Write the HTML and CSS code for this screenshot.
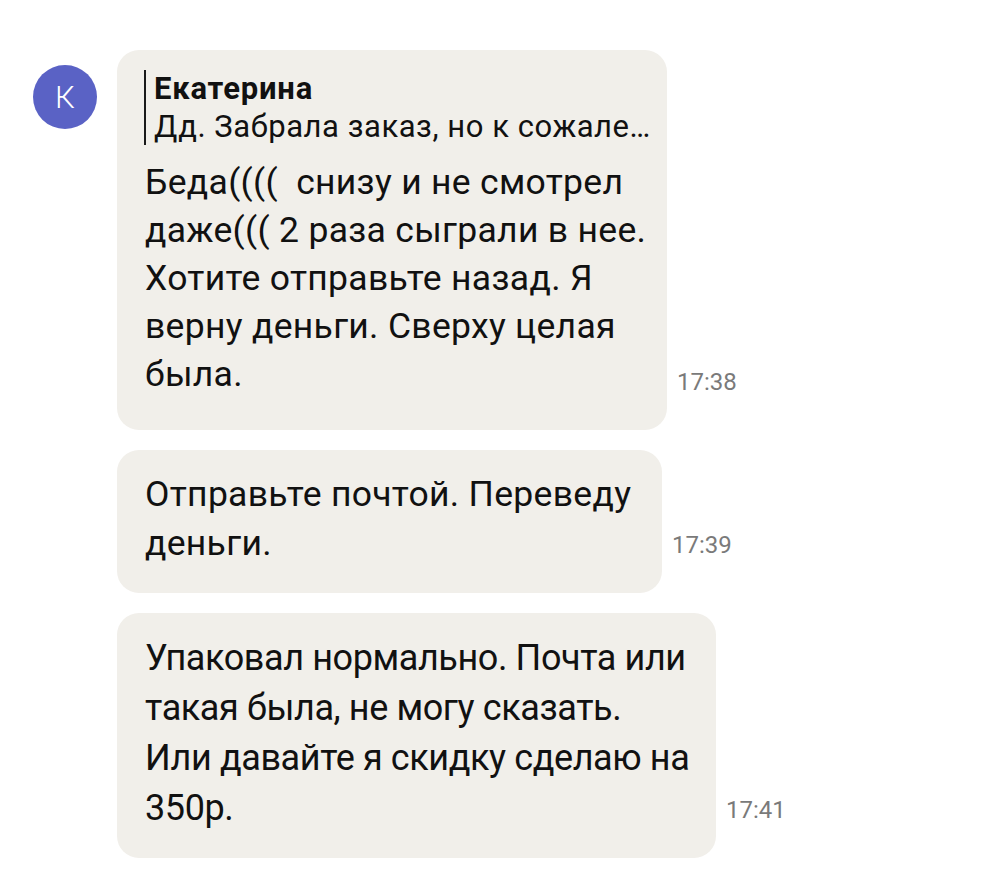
FILE: index.html
```html
<!DOCTYPE html>
<html lang="ru">
<head>
    <meta charset="UTF-8">
    <meta name="viewport" content="width=device-width, initial-scale=1.0">
    <title>Чат</title>
    <link rel="stylesheet" href="styles.css">
</head>
<body>
    <main class="chat">
        <!-- first message has avatar + quoted reply -->
        <div class="msg-row">
            <div class="avatar">К</div>
            <div class="bubble bubble-first">
                <div class="reply">
                    <div class="reply-name">Екатерина</div>
                    <div class="reply-text">Дд. Забрала заказ, но к сожале…</div>
                </div>
                <p class="msg-text">Беда(((( &nbsp;снизу и не смотрел<br>даже((( 2 раза сыграли в нее.<br>Хотите отправьте назад. Я<br>верну деньги. Сверху целая<br>была.</p>
            </div>
            <span class="msg-time">17:38</span>
        </div>

        <div class="msg-row">
            <div class="avatar-space"></div>
            <div class="bubble bubble-second">
                <p class="msg-text">Отправьте почтой. Переведу<br>деньги.</p>
            </div>
            <span class="msg-time">17:39</span>
        </div>

        <div class="msg-row">
            <div class="avatar-space"></div>
            <div class="bubble bubble-third">
                <p class="msg-text">Упаковал нормально. Почта или<br>такая была, не могу сказать.<br>Или давайте я скидку сделаю на<br>350р.</p>
            </div>
            <span class="msg-time">17:41</span>
        </div>
    </main>
</body>
</html>
```

FILE: styles.css
```css
/* Chat layout */
body {
    margin: 0;
    background-color: #ffffff;
    font-family: Roboto, "Noto Sans", sans-serif;
    color: #111111;
}

.chat {
    padding: 50px 0 0 33px;
    display: flex;
    flex-direction: column;
    gap: 20px;
}

.msg-row {
    display: flex;
    align-items: flex-end;
}

.avatar,
.avatar-space {
    width: 64px;
    flex-shrink: 0;
    margin-right: 20px;
}

.avatar {
    height: 64px;
    align-self: flex-start;
    margin-top: 15px;
    border-radius: 50%;
    background-color: #5a62c5;
    color: #ffffff;
    font-size: 31px;
    font-weight: 300;
    display: flex;
    align-items: center;
    justify-content: center;
}

/* Bubbles */
.bubble {
    background-color: #f1efea;
    border-radius: 22px;
    padding: 20px 28px 25px;
    box-sizing: border-box;
}

.bubble-first {
    width: 550px;
    padding-bottom: 32px;
}

.bubble-second { width: 545px; }
.bubble-third { width: 599px; }

.reply {
    border-left: 2px solid #1a1a1a;
    padding-left: 8px;
    margin: 0 0 13px -1px;
    white-space: nowrap;
}

.reply-name {
    font-size: 31px;
    font-weight: 700;
    letter-spacing: 0.8px;
    line-height: 37.5px;
}

.reply-text {
    font-size: 31px;
    letter-spacing: 0.55px;
    line-height: 37.5px;
}

.msg-text {
    margin: 0;
    font-size: 35.5px;
    letter-spacing: 0.3px;
    line-height: 48px;
    white-space: nowrap;
}

.bubble-second .msg-text {
    line-height: 49px;
}

.bubble-third .msg-text {
    font-size: 36px;
    letter-spacing: -0.4px;
    line-height: 50px;
}

.msg-time {
    margin: 0 0 35px 10px;
    font-size: 24px;
    line-height: 26px;
    color: #7a7a7a;
}
```
